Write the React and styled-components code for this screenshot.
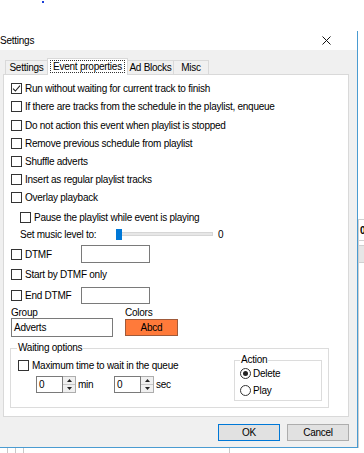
import React from "react";
import styled, { createGlobalStyle } from "styled-components";

const Global = createGlobalStyle`
  html, body { margin: 0; padding: 0; background: #fff; }
  body { font-family: "Liberation Sans", Arial, sans-serif; }
  * { box-sizing: border-box; }
`;

const Desktop = styled.div`
  width: 364px;
  height: 453px;
  overflow: hidden;
  background: #fff;
  display: grid;
  grid-template-columns: 358px 1fr;
  grid-template-rows: 31px 417px 1fr;
  font-family: "Liberation Sans", Arial, sans-serif;
  font-size: 10px;
  letter-spacing: -0.25px;
  color: #000;
`;

const TopStrip = styled.div`
  grid-column: 1 / 3;
  display: flex;
  align-items: flex-start;
  padding-left: 42px;
`;

const Dot = styled.span`
  width: 2px;
  height: 2px;
  margin-top: 1px;
  background: #1b3fd8;
`;

const Dialog = styled.div`
  display: flex;
  flex-direction: column;
  border-right: 1px solid #4a9bd1;
  border-bottom: 1px solid #4a9bd1;
  background: #f0f0f0;
`;

const TitleBar = styled.div`
  height: 19px;
  background: #fff;
  display: flex;
  align-items: center;
  justify-content: space-between;
  padding-right: 26px;
  font-size: 10px;
`;

const Body = styled.div`
  flex: 1;
  display: flex;
  flex-direction: column;
  padding: 8px 0 0 3px;
`;

const TabRow = styled.div`
  display: flex;
  align-items: flex-end;
  height: 16px;
  padding-left: 2px;
`;

const Tab = styled.div`
  position: relative;
  width: ${(p) => p.$w}px;
  height: ${(p) => (p.$active ? 17 : 14)}px;
  margin-bottom: ${(p) => (p.$active ? -1 : 0)}px;
  background: ${(p) => (p.$active ? "#fff" : "#f0f0f0")};
  border: 1px solid #d9d9d9;
  border-bottom: none;
  margin-left: ${(p) => (p.$first ? 0 : -1)}px;
  z-index: ${(p) => (p.$active ? 2 : 1)};
  display: flex;
  align-items: center;
  justify-content: center;
  line-height: 12px;
`;

const Focus = styled.span`
  border: 1px dotted #333;
  padding: 0 2px;
  line-height: 11px;
  margin-top: -1px;
`;

const Panel = styled.div`
  width: 346px;
  height: 343px;
  background: #fff;
  border: 1px solid #d9d9d9;
  padding: 5px 0 0 7px;
  display: flex;
  flex-direction: column;
`;

const Row = styled.div`
  display: flex;
  align-items: center;
  height: ${(p) => p.$h || 18}px;
  margin-top: ${(p) => p.$mt || 0}px;
  padding-left: ${(p) => p.$indent || 0}px;
  white-space: nowrap;
  flex: none;
`;

const Box = styled.span`
  width: 11px;
  height: 11px;
  border: 1px solid #333;
  background: #fff;
  flex: none;
  margin-right: 3px;
  display: inline-flex;
`;

const Check = ({ checked }) => (
  <Box>
    {checked && (
      <svg width="9" height="9" viewBox="0 0 9 9">
        <path d="M1 4.6 L3.4 7 L8 1.6" fill="none" stroke="#222" strokeWidth="1.1" />
      </svg>
    )}
  </Box>
);

const LabelCell = styled.span`
  width: ${(p) => p.$w}px;
  flex: none;
`;

const TextBox = styled.div`
  width: ${(p) => p.$w}px;
  height: ${(p) => p.$h || 18}px;
  border: 1px solid #7a7a7a;
  background: #fff;
  padding-left: 2px;
  display: flex;
  align-items: center;
  flex: none;
`;

const Slider = styled.div`
  position: relative;
  width: 96px;
  height: 11px;
  display: flex;
  align-items: center;
  flex: none;
`;

const Track = styled.div`
  width: 100%;
  height: 4px;
  background: #e7e7e7;
  border: 1px solid #d6d6d6;
`;

const Thumb = styled.div`
  position: absolute;
  left: -1px;
  top: 0;
  width: 6px;
  height: 11px;
  background: #0078d7;
`;

const LevelValue = styled.span`
  margin-left: 5px;
`;

const SplitRow = styled.div`
  display: flex;
  align-items: center;
  height: ${(p) => p.$h}px;
  margin-top: ${(p) => p.$mt || 0}px;
  flex: none;
`;

const ColorBox = styled.div`
  width: 53px;
  height: 17px;
  background: #ff7a3a;
  border: 1px solid #a05a3a;
  display: flex;
  align-items: center;
  justify-content: center;
`;

const GroupBox = styled.div`
  position: relative;
  width: ${(p) => p.$w}px;
  height: ${(p) => p.$h}px;
  margin-top: ${(p) => p.$mt || 0}px;
  margin-left: ${(p) => p.$ml || 0}px;
  border: 1px solid #dcdcdc;
  flex: none;
`;

const GroupTitle = styled.span`
  position: absolute;
  top: -7px;
  left: ${(p) => p.$left}px;
  background: #fff;
  padding: 0 1px;
  line-height: 12px;
`;

const WaitInner = styled.div`
  display: flex;
  justify-content: space-between;
  align-items: flex-start;
  padding: 0 6px 0 7px;
`;

const WaitLeft = styled.div`
  padding-top: 7px;
  display: flex;
  flex-direction: column;
`;

const SpinRow = styled.div`
  display: flex;
  align-items: center;
  height: 17px;
  margin-top: 2px;
  padding-left: 18px;
`;

const SpinField = styled.div`
  display: flex;
  align-items: center;
  width: ${(p) => p.$w}px;
  flex: none;
`;

const SpinArrows = styled.div`
  width: 13px;
  height: 17px;
  display: flex;
  flex-direction: column;
  border: 1px solid #adadad;
  border-left: none;
  background: #f0f0f0;
`;

const SpinHalf = styled.div`
  flex: 1;
  display: flex;
  align-items: center;
  justify-content: center;
  border-top: ${(p) => (p.$down ? "1px solid #c8c8c8" : "none")};
`;

const Unit = styled.span`
  margin-left: 2px;
`;

const Spinner = ({ unit, w }) => (
  <SpinField $w={w}>
    <TextBox $w={27} $h={17}>0</TextBox>
    <SpinArrows>
      <SpinHalf>
        <svg width="5" height="3" viewBox="0 0 5 3"><path d="M0 3 L2.5 0 L5 3Z" fill="#222" /></svg>
      </SpinHalf>
      <SpinHalf $down>
        <svg width="5" height="3" viewBox="0 0 5 3"><path d="M0 0 L2.5 3 L5 0Z" fill="#222" /></svg>
      </SpinHalf>
    </SpinArrows>
    <Unit>{unit}</Unit>
  </SpinField>
);

const ActionInner = styled.div`
  padding: 4px 0 0 5px;
  display: flex;
  flex-direction: column;
`;

const RadioRow = styled.div`
  display: flex;
  align-items: center;
  height: ${(p) => p.$h}px;
`;

const RadioCircle = styled.span`
  width: 11px;
  height: 11px;
  border-radius: 50%;
  border: 1px solid #333;
  background: #fff;
  margin-right: 2px;
  display: inline-flex;
  align-items: center;
  justify-content: center;
  flex: none;
`;

const RadioDot = styled.span`
  width: 5px;
  height: 5px;
  border-radius: 50%;
  background: #222;
`;

const ButtonRow = styled.div`
  display: flex;
  justify-content: flex-end;
  gap: 7px;
  margin-top: 7px;
  padding-right: 8px;
`;

const Button = styled.div`
  width: ${(p) => p.$w}px;
  height: 17px;
  background: #e1e1e1;
  border: 1px solid ${(p) => (p.$default ? "#0078d7" : "#adadad")};
  display: flex;
  align-items: center;
  justify-content: center;
`;

const Side = styled.div`
  display: flex;
  flex-direction: column;
  padding-top: 188px;
`;

const SideCell = styled.div`
  height: ${(p) => p.$h}px;
  border-top: 1px solid ${(p) => p.$line || "#d0d0d0"};
  background: ${(p) => p.$bg || "#fff"};
  font-weight: bold;
  font-size: 10px;
  line-height: ${(p) => p.$h}px;
  padding-left: 1px;
  border-left: 1px solid #d0d0d0;
`;

const Bottom = styled.div`
  grid-column: 1 / 3;
  display: flex;
  background: #fff;
`;

const Tick = styled.span`
  width: ${(p) => p.$w}px;
  border-right: 1px solid #c8c8c8;
  flex: none;
`;

const CloseIcon = () => (
  <svg width="9" height="9" viewBox="0 0 9 9">
    <path d="M0.5 0.5 L8.5 8.5 M8.5 0.5 L0.5 8.5" stroke="#111" strokeWidth="1" />
  </svg>
);

const checks = [
  ["Run without waiting for current track to finish", 17, true],
  ["If there are tracks from the schedule in the playlist, enqueue", 19],
  ["Do not action this event when playlist is stopped", 18],
  ["Remove previous schedule from playlist", 18],
  ["Shuffle adverts", 18],
  ["Insert as regular playlist tracks", 18],
  ["Overlay playback", 18],
];

export default function App() {
  return (
    <>
      <Global />
      <Desktop>
        <TopStrip>
          <Dot />
        </TopStrip>
        <Dialog>
          <TitleBar>
            <span>Settings</span>
            <CloseIcon />
          </TitleBar>
          <Body>
            <TabRow>
              <Tab $w={43} $first>Settings</Tab>
              <Tab $w={81} $active>
                <Focus>Event properties</Focus>
              </Tab>
              <Tab $w={47}>Ad Blocks</Tab>
              <Tab $w={36}>Misc</Tab>
            </TabRow>
            <Panel>
              {checks.map(([t, h, c]) => (
                <Row key={t} $h={h}>
                  <Check checked={c} />
                  {t}
                </Row>
              ))}
              <Row $mt={2} $indent={9}>
                <Check />
                Pause the playlist while event is playing
              </Row>
              <Row $h={16} $indent={9}>
                <LabelCell $w={97}>Set music level to:</LabelCell>
                <Slider>
                  <Track />
                  <Thumb />
                </Slider>
                <LevelValue>0</LevelValue>
              </Row>
              <Row $mt={3}>
                <Check />
                <LabelCell $w={56}>DTMF</LabelCell>
                <TextBox $w={69} />
              </Row>
              <Row $mt={2}>
                <Check />
                Start by DTMF only
              </Row>
              <Row $mt={3}>
                <Check />
                <LabelCell $w={56}>End DTMF</LabelCell>
                <TextBox $w={69} $h={17} />
              </Row>
              <SplitRow $h={12} $mt={2}>
                <LabelCell $w={114}>Group</LabelCell>
                <span>Colors</span>
              </SplitRow>
              <SplitRow $h={19}>
                <TextBox $w={102} $h={19}>Adverts</TextBox>
                <LabelCell $w={12} />
                <ColorBox>Abcd</ColorBox>
              </SplitRow>
              <GroupBox $w={319} $h={60} $mt={11} $ml={-1}>
                <GroupTitle $left={6}>Waiting options</GroupTitle>
                <WaitInner>
                  <WaitLeft>
                    <Row>
                      <Check />
                      Maximum time to wait in the queue
                    </Row>
                    <SpinRow>
                      <Spinner unit="min" w={78} />
                      <Spinner unit="sec" w={60} />
                    </SpinRow>
                  </WaitLeft>
                  <GroupBox $w={88} $h={41} $mt={11}>
                    <GroupTitle $left={5}>Action</GroupTitle>
                    <ActionInner>
                      <RadioRow $h={17}>
                        <RadioCircle>
                          <RadioDot />
                        </RadioCircle>
                        Delete
                      </RadioRow>
                      <RadioRow $h={16}>
                        <RadioCircle />
                        Play
                      </RadioRow>
                    </ActionInner>
                  </GroupBox>
                </WaitInner>
              </GroupBox>
            </Panel>
            <ButtonRow>
              <Button $w={62} $default>OK</Button>
              <Button $w={62}>Cancel</Button>
            </ButtonRow>
          </Body>
        </Dialog>
        <Side>
          <SideCell $h={21}>0</SideCell>
          <SideCell $h={5} />
          <SideCell $h={19} $bg="#e6e6e6" />
          <SideCell $h={200} />
        </Side>
        <Bottom>
          <Tick $w={8} />
          <Tick $w={8} />
          <Tick $w={8} />
          <Tick $w={206} />
        </Bottom>
      </Desktop>
    </>
  );
}
